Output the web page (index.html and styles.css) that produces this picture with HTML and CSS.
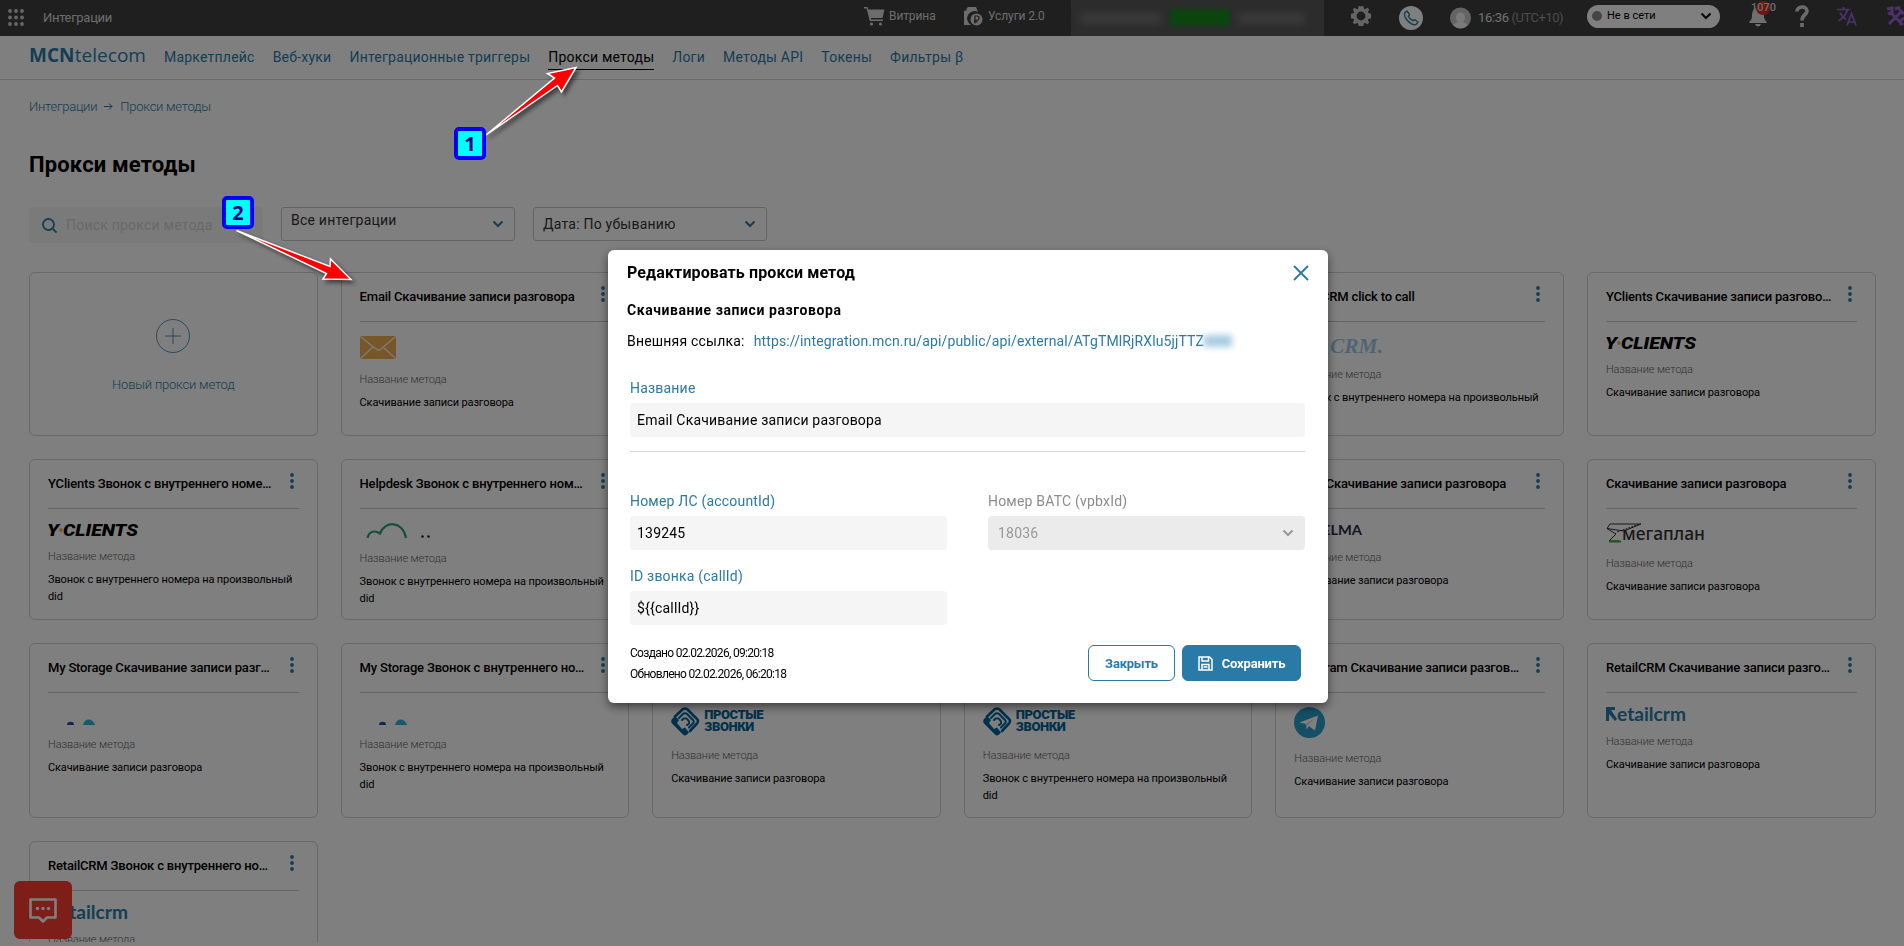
FILE: index.html
```html
<!DOCTYPE html>
<html lang="ru">
<head>
  <meta charset="UTF-8" />
  <meta name="viewport" content="width=device-width, initial-scale=1.0" />
  <title>Прокси методы</title>
  <link rel="stylesheet" href="styles.css">
</head>
<body>
  <!-- shared icons and logos -->
  <svg class="defs" width="0" height="0">
    <symbol id="chevron" viewBox="0 0 12 8"><path d="M1.5 1.5 6 6l4.500-4.500" fill="none" stroke="currentColor" stroke-width="2"/></symbol>
    <symbol id="dots" viewBox="0 0 4 16"><circle cx="2" cy="2" r="1.900"/><circle cx="2" cy="8" r="1.900"/><circle cx="2" cy="14" r="1.900"/></symbol>
    <symbol id="storage" viewBox="0 0 60 18">
      <path d="M19 18a3.500 3.200 0 0 1 7 0z" fill="#2350a8"/><path d="M35 18c1-7.500 10-7.500 12 0z" fill="#2cb5dd"/>
    </symbol>
    <symbol id="prostye" viewBox="0 0 30 29">
      <g fill="none" stroke="#00639b" stroke-width="2.600" stroke-linecap="round" stroke-linejoin="round">
        <path d="M4 9.500 11.500 2.500Q14 .5 16.500 2.500L26 12Q28 14 26 16.500L19 24"/>
        <path d="M8 11l4-4q2-1.500 4 0l6 6q1.500 2 0 3.500l-4 4" stroke-width="2"/>
        <path d="M11 13q3-3.500 6 0t-1 5" stroke-width="2"/>
      </g>
      <path d="M1 12Q-.5 14 1 16.500L12 27.500q2 2 4 0l2-2-4-5-3 1.500-5-6 2-3-4-4z" fill="#00639b"/>
    </symbol>
  </svg>

  <header class="topbar">
    <svg class="apps" width="16" height="17" viewBox="0 0 16 17" fill="#d0d0d0"><circle cx="2" cy="2" r="1.900"/><circle cx="8" cy="2" r="1.900"/><circle cx="14" cy="2" r="1.900"/><circle cx="2" cy="8.500" r="1.900"/><circle cx="8" cy="8.500" r="1.900"/><circle cx="14" cy="8.500" r="1.900"/><circle cx="2" cy="15" r="1.900"/><circle cx="8" cy="15" r="1.900"/><circle cx="14" cy="15" r="1.900"/></svg>
    <span class="app-name">Интеграции</span>
    <div class="top-link shop">
      <svg width="21" height="19" viewBox="0 0 21 19" fill="#d8d8d8"><path d="M0 0h3.500l.8 2.500H20.500L18.500 11H6.800l.4 1.500H19V14H5.800L2.600 1.500H0z"/><circle cx="7.500" cy="17" r="1.600"/><circle cx="16.500" cy="17" r="1.600"/></svg>
      <span>Витрина</span>
    </div>
    <div class="top-link services">
      <svg width="20" height="19" viewBox="0 0 20 19" fill="#d8d8d8"><path d="M5 0h8l2 5a7 7 0 0 0-7 13H1V4z"/><path d="M0 4h4V0" fill="#3e3e3e" opacity=".5"/><circle cx="13.500" cy="12.500" r="6"/><path d="M12 16.500V9h2a2 2 0 0 1 0 4.300h-3m0 1.500h3.500" fill="none" stroke="#3e3e3e" stroke-width="1.200"/></svg>
      <span>Услуги 2.0</span>
    </div>
    <div class="balance"><i class="smudge"></i><i class="smudge green"></i><i class="smudge last"></i></div>
    <svg class="gear" width="22" height="22" viewBox="0 0 24 24"><path fill="#c8c8c8" fill-rule="evenodd" d="M9.500 1h2l.5 1.500L12.500 1h2l.8 3 1.200.5L19.200 3 21 4.800l-1.500 2.700.5 1.200 3 .8v5l-3 .8-.5 1.200 1.500 2.700-1.800 1.800-2.700-1.500-1.200.5-.8 3h-5l-.8-3-1.200-.5L4.800 21 3 19.200l1.500-2.700L4 15.300l-3-.8v-5l3-.8.500-1.200L3 4.800 4.800 3l2.700 1.500L8.700 4zM12 7.200a4.800 4.800 0 1 0 0 9.600 4.800 4.800 0 0 0 0-9.600z"/></svg>
    <svg class="phone" width="24" height="24" viewBox="0 0 24 24"><circle cx="12" cy="12" r="12" fill="#fff"/><path d="M6 6.500 8 5l2.500 3.500L9.300 10.300q1.500 3 4.400 4.400l1.800-1.200L19 16l-1.500 2q-2 1.500-5-.2Q8 15.500 5.900 10.500 5 8 6 6.500z" fill="none" stroke="#2a7aa8" stroke-width="1.400" stroke-linejoin="round"/></svg>
    <svg class="avatar" width="21" height="22" viewBox="0 0 21 22"><circle cx="10.500" cy="11" r="10.500" fill="#c9c9c9"/><path d="M10.500 5.500c6 0 5 8 2.500 9.500 2 1 3.500 1 4.500 3.500a10.500 10.500 0 0 1-14 0C4.500 16 6 16 8 15 5.500 13.500 4.500 5.500 10.500 5.500z" fill="#f4f4f4"/></svg>
    <div class="clock"><b>16:36</b> (UTC+10)</div>
    <div class="status"><i></i><span>Не в сети</span><svg width="12" height="8"><use href="#chevron"/></svg></div>
    <div class="bell">
      <svg width="18" height="19" viewBox="0 0 18 19" fill="#dedede"><path d="M9 0c5 0 6 4 6 8 0 3 1 4 2.500 5.500V15H.5v-1.500C2 12 3 11 3 8c0-4 1-8 6-8zM6 16h6q-1 2.500-3 2.500T6 16z"/></svg>
      <span>1070</span>
    </div>
    <svg class="help" width="14" height="22" viewBox="0 0 14 22" fill="none" stroke="#d8d8d8" stroke-width="3.600"><path d="M2 6.500C2 .5 12 .5 12 6c0 4-5 3.500-5 9.500"/><path d="M7 18v4"/></svg>
    <svg class="lang" width="20" height="20" viewBox="0 0 20 20" fill="none" stroke="#9a63d8" stroke-width="1.700"><path d="M0 3.500h13M6.500 1v2.500M10.500 3.500C9.500 8 6 12 1.500 15M3 6.500c1.500 3.500 3.500 5.500 6 7M10 19.500l4.500-12 4.500 12M11.500 16h6"/></svg>
    <svg class="tools" width="20" height="20" viewBox="0 0 20 20" fill="none" stroke="#9a63d8" stroke-width="3"><path d="M4 6 17 19M1 3l5-1v4l-4 2M3 18 15 6M12 2l6 6M9 3l5-2M18 12l-4 3 1 4"/></svg>
  </header>

  <nav class="menu">
    <div class="logo"><b>MCN</b>telecom</div>
    <a>Маркетплейс</a>
    <a>Веб-хуки</a>
    <a>Интеграционные триггеры</a>
    <a class="active">Прокси методы</a>
    <a>Логи</a>
    <a>Методы API</a>
    <a>Токены</a>
    <a>Фильтры β</a>
  </nav>

  <main class="page">
    <div class="breadcrumbs">
      <span>Интеграции</span>
      <svg width="9" height="9" viewBox="0 0 9 9" fill="none" stroke="currentColor"><path d="M0 4.500h8M5 1.500l3 3-3 3"/></svg>
      <span>Прокси методы</span>
    </div>
    <h1>Прокси методы</h1>

    <div class="filters">
      <div class="search">
        <svg width="15" height="15" viewBox="0 0 15 15" fill="none" stroke="#2a7aa8" stroke-width="1.800"><circle cx="6.500" cy="6.500" r="5.500"/><path d="m10.500 10.500 4 4"/></svg>
        <span>Поиск прокси метода</span>
      </div>
      <div class="select all"><span>Все интеграции</span><svg width="12" height="8"><use href="#chevron"/></svg></div>
      <div class="select"><span>Дата: По убыванию</span><svg width="12" height="8"><use href="#chevron"/></svg></div>
    </div>

    <div class="cards">
      <div class="card new">
        <svg width="34" height="34" viewBox="0 0 34 34" fill="none" stroke="#2a7aa8" stroke-width=".8"><circle cx="17" cy="17" r="16.500"/><path d="M9 17h16M17 9v16"/></svg>
        <span>Новый прокси метод</span>
      </div>
      <div class="card">
        <div class="card-head"><b>Email Скачивание записи разговора</b><svg class="dots"><use href="#dots"/></svg></div>
        <svg class="brand" width="36" height="23" viewBox="0 0 36 23"><rect width="36" height="23" rx="2" fill="#efad52"/><path d="M1 1l15 12q2.500 2 5 0L35 1M1 22l12-11M35 22 23 11" fill="none" stroke="#fff4e2" stroke-width="1.400"/></svg>
        <small>Название метода</small>
        <p>Скачивание записи разговора</p>
      </div>
      <div class="card"></div>
      <div class="card"></div>
      <div class="card">
        <div class="card-head"><b>AmoCRM click to call</b><svg class="dots"><use href="#dots"/></svg></div>
        <svg class="brand" width="90" height="18" viewBox="0 0 90 18"><text x="36" y="17" class="crm-text" textLength="53" lengthAdjust="spacingAndGlyphs">CRM.</text></svg>
        <small>Название метода</small>
        <p>Звонок с внутреннего номера на произвольный did</p>
      </div>
      <div class="card">
        <div class="card-head"><b>YClients Скачивание записи разгово…</b><svg class="dots"><use href="#dots"/></svg></div>
        <svg class="brand" width="92" height="13" viewBox="0 0 92 13">
          <text x="-1" y="13" class="yc-text" textLength="12" lengthAdjust="spacingAndGlyphs">Y</text>
          <text x="15" y="13" class="yc-text" textLength="75" lengthAdjust="spacingAndGlyphs">CLIENTS</text>
          <circle cx="13" cy="7" r="1.900" fill="#fbb03b"/>
        </svg>
        <small>Название метода</small>
        <p>Скачивание записи разговора</p>
      </div>

      <div class="card">
        <div class="card-head"><b>YClients Звонок с внутреннего номе…</b><svg class="dots"><use href="#dots"/></svg></div>
        <svg class="brand" width="92" height="13" viewBox="0 0 92 13">
          <text x="-1" y="13" class="yc-text" textLength="12" lengthAdjust="spacingAndGlyphs">Y</text>
          <text x="15" y="13" class="yc-text" textLength="75" lengthAdjust="spacingAndGlyphs">CLIENTS</text>
          <circle cx="13" cy="7" r="1.900" fill="#fbb03b"/>
        </svg>
        <small>Название метода</small>
        <p>Звонок с внутреннего номера на произвольный did</p>
      </div>
      <div class="card">
        <div class="card-head"><b>Helpdesk Звонок с внутреннего ном…</b><svg class="dots"><use href="#dots"/></svg></div>
        <svg class="brand" width="80" height="15" viewBox="0 0 80 15"><path d="M7.500 15C9 8 15 7 20 10.500 25-3 43-2 46 15" fill="none" stroke="#2f9e74" stroke-width="2.200"/><circle cx="62.500" cy="13.500" r="1.300" fill="#222"/><circle cx="68.500" cy="13.500" r="1.300" fill="#222"/></svg>
        <small>Название метода</small>
        <p>Звонок с внутреннего номера на произвольный did</p>
      </div>
      <div class="card"></div>
      <div class="card"></div>
      <div class="card">
        <div class="card-head"><b>Elma Скачивание записи разговора</b><svg class="dots"><use href="#dots"/></svg></div>
        <svg class="brand" width="80" height="14" viewBox="0 0 80 14"><text x="28" y="12" class="elma-text" textLength="40" lengthAdjust="spacingAndGlyphs">ELMA</text></svg>
        <small>Название метода</small>
        <p>Скачивание записи разговора</p>
      </div>
      <div class="card">
        <div class="card-head"><b>Скачивание записи разговора</b><svg class="dots"><use href="#dots"/></svg></div>
        <svg class="brand" width="100" height="20" viewBox="0 0 100 20"><path d="M4 1h31L18 8 1 5.500zM1 5.500 10 11l-7 7h10" fill="none" stroke="#333"/><path d="M11 9 34 1" stroke="#333" stroke-dasharray="2 1"/><path d="M3 17.500h12v2H3z" fill="#39a84e"/><text x="16" y="17" class="mega-text" textLength="83" lengthAdjust="spacingAndGlyphs">мегаплан</text></svg>
        <small>Название метода</small>
        <p>Скачивание записи разговора</p>
      </div>

      <div class="card">
        <div class="card-head"><b>My Storage Скачивание записи разг…</b><svg class="dots"><use href="#dots"/></svg></div>
        <svg class="brand storage" width="60" height="18"><use href="#storage"/></svg>
        <small>Название метода</small>
        <p>Скачивание записи разговора</p>
      </div>
      <div class="card">
        <div class="card-head"><b>My Storage Звонок с внутреннего но…</b><svg class="dots"><use href="#dots"/></svg></div>
        <svg class="brand storage" width="60" height="18"><use href="#storage"/></svg>
        <small>Название метода</small>
        <p>Звонок с внутреннего номера на произвольный did</p>
      </div>
      <div class="card">
        <div class="card-head"></div>
        <div class="brand prostye"><svg width="30" height="29"><use href="#prostye"/></svg><div>ПРОСТЫЕ<br>ЗВОНКИ</div></div>
        <small>Название метода</small>
        <p>Скачивание записи разговора</p>
      </div>
      <div class="card">
        <div class="card-head"></div>
        <div class="brand prostye"><svg width="30" height="29"><use href="#prostye"/></svg><div>ПРОСТЫЕ<br>ЗВОНКИ</div></div>
        <small>Название метода</small>
        <p>Звонок с внутреннего номера на произвольный did</p>
      </div>
      <div class="card">
        <div class="card-head"><b>Telegram Скачивание записи разгов…</b><svg class="dots"><use href="#dots"/></svg></div>
        <svg class="brand" width="31" height="31" viewBox="0 0 31 31"><circle cx="15.500" cy="15.500" r="15.500" fill="#2a9fcb"/><path d="M5.500 15.500 24 8.500l-3 15-6-4.200-2.500 3-.8-5.300z" fill="#fff"/><path d="M11.700 17 21 11l-7.500 7.300-1 4z" fill="#c3dbe8"/></svg>
        <small>Название метода</small>
        <p>Скачивание записи разговора</p>
      </div>
      <div class="card">
        <div class="card-head"><b>RetailCRM Скачивание записи разго…</b><svg class="dots"><use href="#dots"/></svg></div>
        <svg class="brand" width="82" height="14" viewBox="0 0 82 14">
          <path d="M0 0h9v3H5l6 9-2 2-6-7v7H0z" fill="#2a7aa8"/>
          <text x="11" y="14" class="retail-text" textLength="69" lengthAdjust="spacingAndGlyphs">etailcrm</text>
        </svg>
        <small>Название метода</small>
        <p>Скачивание записи разговора</p>
      </div>

      <div class="card">
        <div class="card-head"><b>RetailCRM Звонок с внутреннего но…</b><svg class="dots"><use href="#dots"/></svg></div>
        <svg class="brand" width="82" height="14" viewBox="0 0 82 14">
          <path d="M0 0h9v3H5l6 9-2 2-6-7v7H0z" fill="#2a7aa8"/>
          <text x="11" y="14" class="retail-text" textLength="69" lengthAdjust="spacingAndGlyphs">etailcrm</text>
        </svg>
        <small>Название метода</small>
      </div>
    </div>
  </main>

  <div class="chat">
    <svg width="28" height="25" viewBox="0 0 28 25"><path d="M1.500 1.500h25v18H18l-4 4-4-4H1.500z" fill="none" stroke="#fff" stroke-width="2.600" stroke-linejoin="round"/><circle cx="8.500" cy="10.500" r="1.700" fill="#fff"/><circle cx="14" cy="10.500" r="1.700" fill="#fff"/><circle cx="19.500" cy="10.500" r="1.700" fill="#fff"/></svg>
  </div>

  <div class="overlay">
    <div class="modal">
      <div class="modal-head">
        <h2>Редактировать прокси метод</h2>
        <svg width="16" height="16" viewBox="0 0 16 16"><path d="M1 1l14 14M15 1 1 15" stroke="#2a7aa8" stroke-width="1.900"/></svg>
      </div>
      <h3>Скачивание записи разговора</h3>
      <div class="external">
        <span>Внешняя ссылка:</span>
        <a>https://integration.mcn.ru/api/public/api/external/ATgTMlRjRXlu5jjTTZ</a><i class="hidden-key"></i>
      </div>
      <div class="form">
        <div class="field wide">
          <label>Название</label>
          <div class="input">Email Скачивание записи разговора</div>
        </div>
        <div class="line wide"></div>
        <div class="field">
          <label>Номер ЛС (accountId)</label>
          <div class="input">139245</div>
        </div>
        <div class="field disabled">
          <label>Номер ВАТС (vpbxId)</label>
          <div class="input"><span>18036</span><svg width="12" height="8"><use href="#chevron"/></svg></div>
        </div>
        <div class="field">
          <label>ID звонка (callId)</label>
          <div class="input">${{callId}}</div>
        </div>
      </div>
      <div class="modal-foot">
        <div class="dates">
          <div>Создано 02.02.2026, 09:20:18</div>
          <div>Обновлено 02.02.2026, 06:20:18</div>
        </div>
        <button class="close">Закрыть</button>
        <button class="save"><svg width="15" height="15" viewBox="0 0 15 15" fill="none" stroke="#fff" stroke-width="1.500"><path d="M1 1h10.500L14 3.500V14H1zM4 1v4h6.500V1M4 14V8.500h7V14M5.500 11h4"/></svg>Сохранить</button>
      </div>
    </div>
  </div>

  <!-- step markers over the page -->
  <svg class="arrows" width="700" height="320" viewBox="0 0 700 320">
    <path d="M576 67.500 547.500 73.500 554.500 78 486 135 557.500 85.500 561.500 92z"/>
    <path d="M351 279.500 330.500 259 330 266.500 236.500 230.500 326.500 273.500 323 279z"/>
  </svg>
  <div class="step step-1">1</div>
  <div class="step step-2">2</div>
</body>
</html>
```

FILE: styles.css
```css
* {
  box-sizing: border-box;
}
body {
  margin: 0;
  height: 946px;
  overflow: hidden;
  background: #fff;
  font-family: Roboto, "Liberation Sans", sans-serif;
  color: #000;
}
h1, h2, h3, p {
  margin: 0;
}
.defs {
  position: absolute;
}

/* top bar */
.topbar {
  display: flex;
  height: 36px;
  background: #3e3e3e;
  color: #d8d8d8;
  font-size: 13px;
  overflow: hidden;
}
.topbar svg {
  flex: none;
}
.apps {
  margin: 9px 0 0 8px;
}
.app-name {
  flex: none;
  width: 821px;
  margin-left: 19px;
  line-height: 35px;
  letter-spacing: -0.300px;
}
.top-link {
  display: flex;
  flex: none;
  gap: 4px;
  height: 32px;
  align-items: center;
  font-size: 12px;
  letter-spacing: -0.100px;
}
.shop {
  width: 99px;
}
.services {
  width: 108px;
  gap: 5px;
}
.balance {
  display: flex;
  flex: none;
  align-items: center;
  width: 253px;
  background: #585858;
  padding-left: 10px;
}
.smudge {
  width: 80px;
  height: 9px;
  background: #7c7c7c;
  filter: blur(4px);
}
.smudge.green {
  width: 60px;
  height: 17px;
  margin: 0 8px 2px 9px;
  background: #168a1c;
  filter: blur(2px);
}
.smudge.last {
  width: 66px;
}
.gear {
  margin: 5px 0 0 26px;
}
.phone {
  margin: 6px 0 0 27px;
}
.avatar {
  margin: 7px 0 0 27px;
}
.clock {
  flex: none;
  width: 109px;
  margin-left: 7px;
  line-height: 35px;
  color: #999;
  letter-spacing: -0.500px;
  white-space: nowrap;
}
.clock b {
  font-weight: 400;
  letter-spacing: -0.300px;
  color: #e0e0e0;
}
.status {
  display: flex;
  flex: none;
  align-items: center;
  width: 133px;
  height: 23px;
  margin-top: 5px;
  padding: 0 8px 2px 5px;
  border-radius: 12px;
  background: #fff;
  color: #000;
  font-size: 11px;
}
.status i {
  width: 10px;
  height: 10px;
  margin-right: 5px;
  border-radius: 50%;
  background: #8a8a8a;
}
.status svg {
  margin-left: auto;
}
.bell {
  position: relative;
  flex: none;
  margin: 8px 0 0 29px;
}
.bell::before {
  content: "";
  position: absolute;
  left: 7px;
  top: -7px;
  width: 14px;
  height: 14px;
  border-radius: 50%;
  background: #e02b20;
}
.bell span {
  position: absolute;
  left: 2px;
  top: -7px;
  font-size: 11px;
  line-height: 13px;
  font-weight: 500;
}
.help {
  margin: 5px 0 0 28px;
}
.lang {
  margin: 6px 0 0 28px;
}
.tools {
  margin: 6px 0 0 29px;
}

/* menu */
.menu {
  display: flex;
  gap: 18px;
  height: 44px;
  padding-left: 29px;
  border-bottom: 1px solid #d0d0d0;
  font-size: 14px;
  letter-spacing: 0.220px;
}
.menu a {
  height: 34px;
  line-height: 42px;
  color: #2a7aa8;
  white-space: nowrap;
}
.menu .active {
  color: #000;
  border-bottom: 1px solid #000;
}
.logo {
  width: 117px;
  font-family: "Open Sans", sans-serif;
  font-size: 19px;
  line-height: 39px;
  letter-spacing: 0.050px;
  color: #2a7aa8;
}

/* page */
.page {
  height: 862px;
  padding: 18px 28.500px 0 29px;
  overflow: hidden;
}
.breadcrumbs {
  display: flex;
  align-items: center;
  gap: 7px;
  height: 16px;
  font-size: 13px;
  font-weight: 300;
  letter-spacing: -0.240px;
  color: #2a7aa8;
}
h1 {
  margin-top: 35px;
  height: 32px;
  font-size: 22px;
  line-height: 32px;
  letter-spacing: 0.150px;
}
.filters {
  display: flex;
  gap: 18px;
  margin-top: 26px;
  height: 65px;
  font-size: 14px;
  letter-spacing: 0.220px;
}
.search {
  display: flex;
  align-items: center;
  gap: 9px;
  width: 234px;
  height: 36px;
  padding-left: 13px;
  border-radius: 4px;
  background: #f5f5f5;
  color: #d2d2d2;
}
.select {
  display: flex;
  align-items: center;
  justify-content: space-between;
  width: 234px;
  height: 34px;
  padding: 0 10px 0 9px;
  border: 1px solid #c8c8c8;
  border-radius: 3px;
  color: #333;
}
.select span {
  margin-top: -1px;
}
.all span {
  margin-top: -8px;
}
.select svg {
  color: #2a7aa8;
}

/* cards */
.cards {
  display: grid;
  grid-template-columns: repeat(6, 1fr);
  grid-template-rows: 164px 161px 175px 200px;
  gap: 23px;
}
.card {
  display: flex;
  flex-direction: column;
  align-items: flex-start;
  padding: 0 18px;
  border: 1px solid #d0d0d0;
  border-radius: 6px;
}
.card-head {
  display: flex;
  align-self: stretch;
  justify-content: space-between;
  height: 49px;
  margin-bottom: 14px;
  padding-right: 5px;
  border-bottom: 1px solid #c8c8c8;
  font-size: 13px;
  line-height: 47px;
  letter-spacing: -0.180px;
  white-space: nowrap;
}
.card-head b {
  font-weight: 500;
}
.dots {
  width: 4px;
  height: 16px;
  margin-top: 13px;
  fill: #2a7aa8;
}
.brand {
  flex: none;
  overflow: visible;
}
.storage {
  margin-bottom: -1px;
}
.card small {
  margin-top: 14px;
  font-size: 11px;
  font-weight: 300;
  line-height: 14px;
  letter-spacing: -0.120px;
  color: #666;
}
.card p {
  margin-top: 7px;
  font-size: 11px;
  line-height: 17px;
  letter-spacing: -0.120px;
}
.new {
  align-items: center;
  padding-top: 46px;
  font-size: 13px;
  font-weight: 300;
  letter-spacing: -0.200px;
  color: #2a7aa8;
}
.new span {
  margin-top: 24px;
}
.yc-text {
  font: italic 900 17px Roboto, sans-serif;
}
.retail-text {
  font: 700 18px Lato, sans-serif;
  fill: #2a7aa8;
}
.prostye {
  display: flex;
  gap: 3px;
  height: 28px;
  font-weight: 900;
  font-size: 13px;
  line-height: 12px;
  letter-spacing: -0.400px;
  color: #00639b;
}
.prostye div {
  padding-top: 2px;
}
.crm-text {
  font: italic 700 21px "Liberation Serif", serif;
  fill: #9ccbea;
}
.elma-text {
  font: 700 14px Lato, sans-serif;
  fill: #252c50;
}
.mega-text {
  font: 500 18px "Noto Sans", sans-serif;
  fill: #333;
}

.chat {
  position: fixed;
  left: 14px;
  bottom: 7px;
  display: flex;
  align-items: center;
  justify-content: center;
  width: 58px;
  height: 58px;
  border-radius: 6px;
  background: #fb3c33;
}

/* modal */
.overlay {
  position: fixed;
  inset: 0;
  display: flex;
  justify-content: center;
  align-items: flex-start;
  padding-top: 250px;
  padding-left: 32px;
  background: rgba(0,0,0,0.5);
}
.modal {
  width: 720px;
  height: 453px;
  padding: 0 19px;
  border-radius: 6px;
  background: #fff;
  box-shadow: 0 4px 10px rgba(0,0,0,0.5);
  font-size: 14px;
  letter-spacing: 0.200px;
}
.modal-head {
  display: flex;
  justify-content: space-between;
  align-items: center;
  height: 45px;
}
h2 {
  font-size: 16px;
  letter-spacing: 0.120px;
}
h3 {
  margin-top: 1px;
  font-size: 14px;
  line-height: 28px;
  letter-spacing: 0.570px;
}
.external {
  display: flex;
  align-items: center;
  height: 34px;
  white-space: nowrap;
}
.external a {
  margin-left: 9px;
  letter-spacing: 0.130px;
  color: #2a7aa8;
}
.hidden-key {
  width: 28px;
  height: 12px;
  background: #a9cce2;
  filter: blur(3px);
}
.form {
  display: grid;
  grid-template-columns: 317px 317px;
  justify-content: space-between;
  padding: 20px 4px 0 3px;
}
.wide {
  grid-column: 1 / 3;
}
.field {
  height: 75px;
}
.field.wide {
  height: 73px;
}
.field label {
  display: block;
  height: 25px;
  line-height: 20px;
  color: #2a7aa8;
}
.input {
  display: flex;
  justify-content: space-between;
  align-items: center;
  height: 34px;
  padding-left: 7px;
  border-radius: 4px;
  background: #f5f5f5;
}
.line {
  height: 40px;
  border-top: 1px solid #d6d6d6;
}
.disabled label {
  color: #8c8c8c;
}
.disabled .input {
  padding: 0 11px 0 10px;
  background: #ebebeb;
  color: #999;
}
.modal-foot {
  display: flex;
  padding: 4px 8px 0 3px;
}
.dates {
  flex: 1;
  margin-top: -2px;
  font-size: 12px;
  line-height: 21px;
  letter-spacing: -0.700px;
}
button {
  display: flex;
  align-items: center;
  justify-content: center;
  height: 36px;
  border: 1px solid #2a7aa8;
  border-radius: 6px;
  font: 700 13px Roboto, sans-serif;
  letter-spacing: -0.200px;
}
.close {
  width: 87px;
  background: #fff;
  color: #2a7aa8;
}
.save {
  gap: 9px;
  width: 119px;
  margin-left: 7px;
  background: #2a7aa8;
  color: #fff;
}

/* step markers */
.arrows {
  position: fixed;
  left: 0;
  top: 0;
  fill: #f00;
  stroke: #fff;
  stroke-width: 1.500;
  filter: drop-shadow(3px 3px 2px rgba(0,0,0,0.5));
}
.step {
  position: fixed;
  width: 32px;
  height: 33px;
  border: 4px solid #00f;
  border-radius: 5px;
  background: #0ff;
  color: #000080;
  font: 700 20px/25px "Open Sans", sans-serif;
  text-align: center;
}
.step-1 {
  left: 454px;
  top: 127px;
}
.step-2 {
  left: 222px;
  top: 196px;
}
```
